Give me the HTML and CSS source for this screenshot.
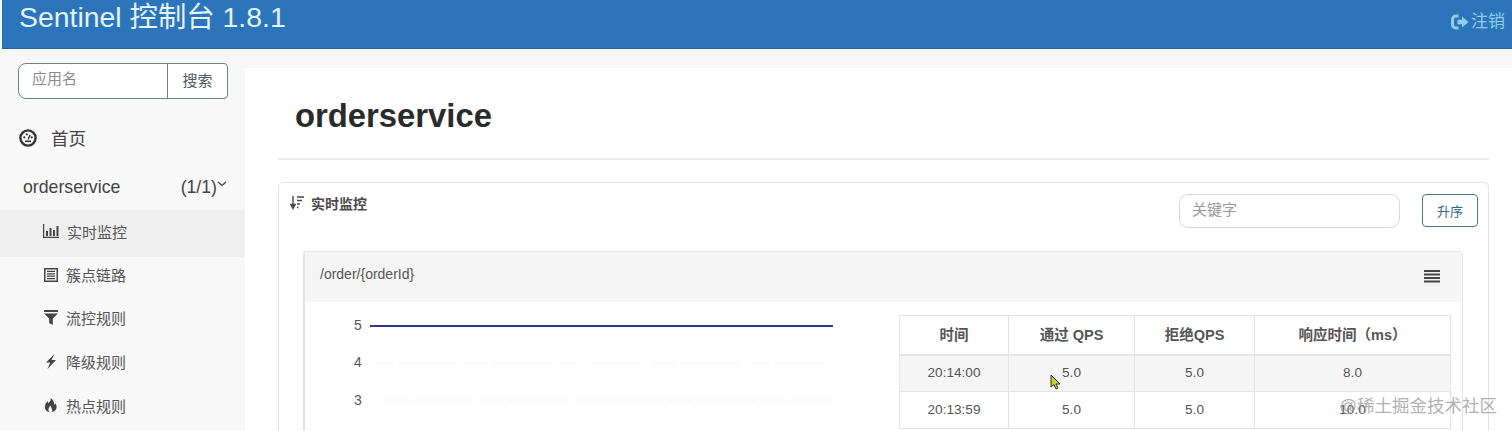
FILE: index.html
```html
<!DOCTYPE html>
<html lang="zh">
<head>
<meta charset="utf-8">
<title>Sentinel 控制台</title>
<link rel="stylesheet" href="styles.css">
</head>
<body>
<header class="topbar">
  <h1 class="brand">Sentinel 控制台 1.8.1</h1>
  <a class="logout">
    <svg class="logout-icon" viewBox="0 0 18 16"><path d="M7.500 2H4.800A3.300 3.300 0 0 0 1.500 5.300v5.400A3.300 3.300 0 0 0 4.800 14h2.700" fill="none" stroke="currentColor" stroke-width="3"/><path d="M6.500 5.800h4.500V2.500L17.500 8 11 13.500v-3.300H6.500z" fill="currentColor"/></svg>
    <span>注销</span>
  </a>
</header>
<div class="layout">
  <aside class="sidebar">
    <div class="search">
      <span class="search-input">应用名</span>
      <span class="search-btn">搜索</span>
    </div>
    <nav class="nav">
      <div class="nav-home">
        <svg class="home-icon" viewBox="0 0 18 18"><circle cx="9" cy="9" r="7.600" fill="none" stroke="currentColor" stroke-width="2.400"/><circle cx="5.300" cy="8.300" r="1.100" fill="currentColor"/><circle cx="7.800" cy="5.300" r="1.100" fill="currentColor"/><circle cx="12.700" cy="8.300" r="1.100" fill="currentColor"/><path d="M9 10.500l2-4.500" stroke="currentColor" stroke-width="1.400"/><path d="M6 12.300h6" stroke="currentColor" stroke-width="1.600"/></svg>
        <span>首页</span>
      </div>
      <div class="nav-app">
        <span>orderservice</span>
        <span class="nav-count">(1/1)<svg class="chev" viewBox="0 0 10 6"><path d="M1 1l4 3.500L9 1" fill="none" stroke="currentColor" stroke-width="1.300"/></svg></span>
      </div>
      <div class="nav-item active">
        <svg class="nav-icon wide" viewBox="0 0 16 14"><path d="M.6 0v13.400H16" fill="none" stroke="currentColor" stroke-width="1.200"/><path d="M3 7h2v5H3zM6.500 4h2v8h-2zM10 6h2v6h-2zM13.500 2h2v10h-2z" fill="currentColor"/></svg>
        <span>实时监控</span>
      </div>
      <div class="nav-item chain">
        <svg class="nav-icon" viewBox="0 0 14 14"><path fill-rule="evenodd" d="M0 0h14v14H0zM1.500 1.500v11h11v-11z" fill="currentColor"/><path d="M3 3.400h8M3 5.800h8M3 8.200h8M3 10.600h8" stroke="currentColor" stroke-width="1.300"/></svg>
        <span>簇点链路</span>
      </div>
      <div class="nav-item">
        <svg class="nav-icon tall" viewBox="0 0 14 15"><path d="M0 0h14v2H0zM0 3.500h14L8.800 8.500V15l-3.600-2V8.500z" fill="currentColor"/></svg>
        <span>流控规则</span>
      </div>
      <div class="nav-item">
        <svg class="nav-icon tall" viewBox="0 0 14 15"><path d="M10.500 0L2 8.500h4.200L3.500 15l8.500-9H7.500z" fill="currentColor"/></svg>
        <span>降级规则</span>
      </div>
      <div class="nav-item">
        <svg class="nav-icon" viewBox="0 0 14 14"><path d="M6.500 0c1 2.500-1 3.500-2 5.200C4 4.500 3.800 4 4 3 1.500 5 .5 7.500 1 10c.5 2.500 2.500 4 4.500 4-1.500-1.500-1.500-3.500 1-6.500.3 2 2.500 3.500 1.500 6.500 3-.5 5-3 4.500-6-.2-1.200-1-2.500-1.500-3-.1 1-.5 1.500-1 2C10.500 4 9 1.500 6.500 0z" fill="currentColor"/></svg>
        <span>热点规则</span>
      </div>
    </nav>
  </aside>
  <main class="main">
    <h2 class="page-title">orderservice</h2>
    <section class="panel">
      <div class="panel-head">
        <div class="panel-title">
          <svg class="sort-icon" viewBox="0 0 14 14"><path d="M3 0v10M.8 8.500L3 12.500l2.200-4z" stroke="currentColor" stroke-width="1.400" fill="currentColor"/><path d="M7 1h7M7 4.500h5M7 8h3M7 11.500h1.500" stroke="currentColor" stroke-width="1.500"/></svg>
          <span>实时监控</span>
        </div>
        <div class="panel-tools">
          <span class="keyword">关键字</span>
          <span class="sort-btn">升序</span>
        </div>
      </div>
      <div class="card">
        <div class="card-head">
          <span>/order/{orderId}</span>
          <svg class="menu-icon" viewBox="0 0 16 13"><path d="M0 1h16M0 4.500h16M0 8h16M0 11.500h16" stroke="currentColor" stroke-width="2.200"/></svg>
        </div>
        <div class="card-body">
          <svg class="chart" viewBox="0 0 593 120" width="593" height="120">
            <text class="tick" x="52" y="28">5</text>
            <text class="tick" x="52" y="65">4</text>
            <text class="tick" x="52" y="103">3</text>
            <line class="grid" x1="64" y1="61" x2="524" y2="61"/>
            <line class="grid" x1="80" y1="98" x2="524" y2="98"/>
            <line class="series" x1="64" y1="24" x2="527" y2="24"/>
          </svg>
          <table class="stats">
            <thead>
              <tr><th class="c1">时间</th><th class="c2">通过 QPS</th><th class="c3">拒绝QPS</th><th class="c4">响应时间（ms）</th></tr>
            </thead>
            <tbody>
              <tr class="hover"><td>20:14:00</td><td>5.0</td><td>5.0</td><td>8.0</td></tr>
              <tr><td>20:13:59</td><td>5.0</td><td>5.0</td><td>10.0</td></tr>
            </tbody>
          </table>
        </div>
      </div>
    </section>
  </main>
</div>
<svg class="cursor" viewBox="0 0 11 16"><path d="M1 1v12l3-2.500 2 4.500 2-1-2-4h4z" fill="#c6cf2a" stroke="#333" stroke-width="1"/></svg>
<div class="watermark">@稀土掘金技术社区</div>
</body>
</html>
```
FILE: styles.css
```css
* { box-sizing: border-box; }
html, body { margin: 0; height: 431px; overflow: hidden; }
body {
  position: relative;
  background: #f8f8f9;
  color: #333;
  font-family: "Liberation Sans", "Noto Sans CJK SC", sans-serif;
  font-size: 14px;
}
.topbar {
  height: 49px;
  margin-left: 2px;
  background: #2c75ba;
  border-bottom: 1px solid #2a6596;
  display: flex;
  justify-content: space-between;
  align-items: flex-start;
  padding: 0 7px 0 17px;
}
.brand {
  margin: 0;
  font-size: 28.400px;
  font-weight: 400;
  line-height: 35px;
  color: #e4f3fc;
}
.logout {
  display: flex;
  align-items: center;
  gap: 2px;
  margin-top: 10px;
  font-size: 17px;
  line-height: 24px;
  color: #8fcdec;
}
.logout-icon { width: 18px; height: 16px; }
.layout { display: flex; height: 382px; }
.sidebar { width: 245px; flex: none; padding-top: 14px; }
.search {
  display: flex;
  width: 210px;
  height: 36px;
  margin-left: 18px;
  background: #fff;
  border: 1px solid #6f7f8c;
  border-radius: 8px 4px 4px 8px;
}
.search-input {
  flex: 1;
  padding-left: 13px;
  line-height: 30px;
  font-size: 15px;
  color: #8c8c8c;
  border-right: 1px solid #6f7f8c;
}
.search-btn {
  width: 59px;
  text-align: center;
  line-height: 34px;
  font-size: 15px;
  color: #4c5a66;
}
.nav { margin-top: 13px; }
.nav-home {
  display: flex;
  align-items: center;
  height: 54px;
  padding: 0 0 3px 19px;
  gap: 14px;
  font-size: 17.500px;
  color: #444;
}
.home-icon { width: 18px; height: 18px; color: #333; }
.nav-app {
  display: flex;
  justify-content: space-between;
  align-items: center;
  height: 44px;
  padding: 0 18px 2px 23px;
  font-size: 17.700px;
  color: #444;
}
.nav-count { display: inline-flex; align-items: flex-start; }
.chev { width: 10px; height: 6px; margin-top: 4px; }
.nav-item {
  display: flex;
  align-items: center;
  height: 44px;
  padding-left: 44px;
  gap: 8px;
  font-size: 15px;
  color: #555;
}
.nav-item.active { height: 47px; background: #efeff0; padding: 0 0 5px 43px; }
.nav-item.chain { height: 38px; padding-bottom: 3px; }
.nav-icon { width: 14px; height: 14px; color: #444; flex: none; }
.nav-icon.wide { width: 16px; }
.nav-icon.tall { height: 15px; }
.main {
  flex: 1;
  margin-top: 19px;
  padding: 0 23px 0 33px;
  background: #fff;
  min-width: 0;
}
.page-title {
  margin: 0;
  height: 92px;
  padding: 26px 0 0 17px;
  font-size: 32.800px;
  line-height: 44px;
  font-weight: 700;
  color: #2b2b2b;
  border-bottom: 2px solid #ececec;
}
.panel {
  margin-top: 22px;
  height: 249px;
  padding: 0 10px 0 26px;
  border: 1px solid #e4e4e4;
  border-bottom: 0;
  border-radius: 5px 5px 0 0;
}
.panel-head {
  display: flex;
  justify-content: space-between;
  height: 68px;
  margin-left: -15px;
}
.panel-title {
  display: flex;
  align-items: center;
  gap: 7px;
  height: 40px;
  font-size: 14px;
  font-weight: 700;
  color: #4a4a4a;
}
.sort-icon { width: 14px; height: 14px; }
.panel-tools { display: flex; gap: 22px; padding-top: 11px; height: 46px; }
.keyword {
  width: 221px;
  height: 34px;
  padding-left: 12px;
  line-height: 30px;
  font-size: 15px;
  color: #999;
  border: 1px solid #d8d8d8;
  border-radius: 9px;
}
.sort-btn {
  width: 56px;
  height: 33px;
  text-align: center;
  line-height: 33px;
  font-size: 13px;
  color: #2b6a8d;
  border: 1px solid #4d7688;
  border-radius: 4px;
}
.card {
  width: 1160px;
  height: 180px;
  margin-left: -2px;
  border: 1px solid #e4e4e4;
  border-width: 1px 1px 0 2px;
  border-radius: 4px 4px 0 0;
}
.card-head {
  display: flex;
  justify-content: space-between;
  align-items: center;
  height: 50px;
  padding: 0 22px 7px 15px;
  background: #f5f5f5;
  font-size: 14px;
  color: #555;
}
.menu-icon { width: 16px; height: 13px; color: #444; margin-top: 5px; }
.card-body { display: flex; padding-left: 1px; }
.chart { flex: none; width: 593px; height: 120px; }
.tick { font-size: 14px; fill: #555; text-anchor: middle; font-family: "Liberation Sans", sans-serif; }
.series { stroke: #2c3690; stroke-width: 2; }
.grid { stroke: #f4f4f2; stroke-width: 1; stroke-dasharray: 24 4 60 6; }
.stats {
  margin-top: 13px;
  width: 551px;
  height: 113px;
  border-collapse: collapse;
  table-layout: fixed;
  font-size: 13.600px;
  color: #555;
  text-align: center;
}
.stats th, .stats td { border: 1px solid #e4e4e4; padding: 0; }
.stats th { height: 39px; padding-bottom: 2px; font-size: 14.500px; font-weight: 700; color: #555; border-bottom-width: 2px; }
.stats td { height: 37px; padding-bottom: 2px; }
.c1 { width: 109px; }
.c2 { width: 126px; }
.c3 { width: 120px; }
.c4 { width: 196px; }
.hover td { background: #f5f5f5; }
.cursor { position: absolute; left: 1050px; top: 374px; width: 11px; height: 16px; }
.watermark {
  position: absolute;
  right: 15px;
  top: 394px;
  font-size: 17.500px;
  line-height: 24px;
  color: rgba(150, 150, 150, 0.75);
}
```
